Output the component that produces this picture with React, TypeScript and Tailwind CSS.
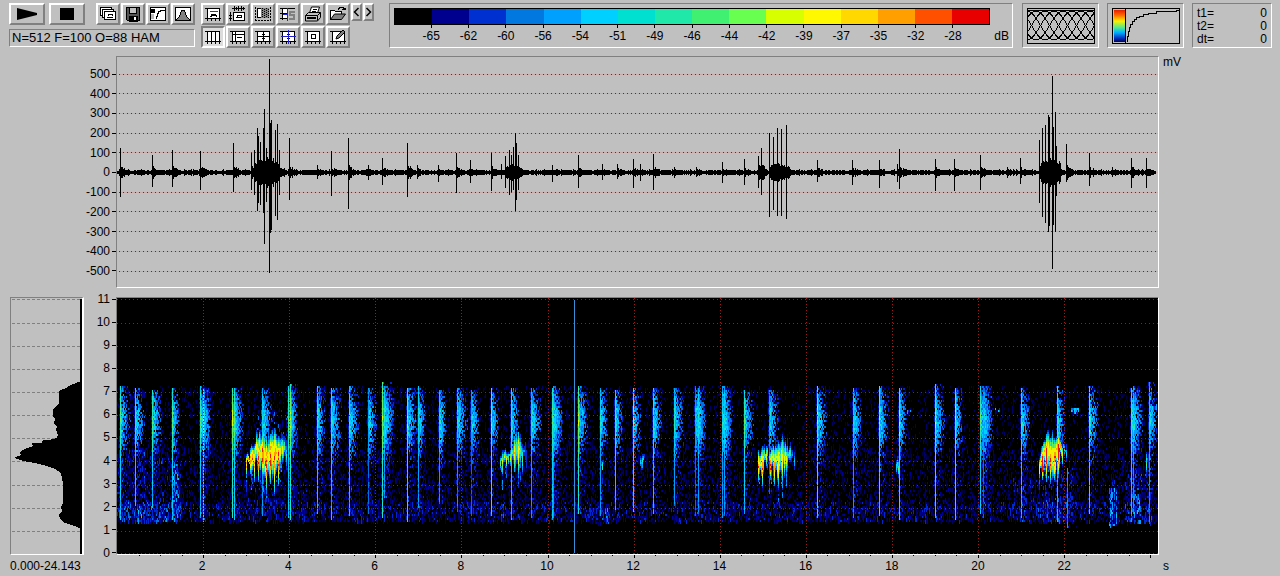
import type { ReactNode } from 'react'

const SCALE = [
    { color: 'bg-[#000000]', label: '-65' },
    { color: 'bg-[#00008f]', label: '-62' },
    { color: 'bg-[#0030d0]', label: '-60' },
    { color: 'bg-[#0078e0]', label: '-56' },
    { color: 'bg-[#00a0ff]', label: '-54' },
    { color: 'bg-[#00d0ff]', label: '-51' },
    { color: 'bg-[#00e0d0]', label: '-49' },
    { color: 'bg-[#20e8a8]', label: '-46' },
    { color: 'bg-[#40f070]', label: '-44' },
    { color: 'bg-[#68ff50]', label: '-42' },
    { color: 'bg-[#d8ff00]', label: '-39' },
    { color: 'bg-[#fff800]', label: '-37' },
    { color: 'bg-[#ffd800]', label: '-35' },
    { color: 'bg-[#ffa000]', label: '-32' },
    { color: 'bg-[#ff5000]', label: '-28' },
    { color: 'bg-[#e80000]', label: '' },
]

// Level colours, quietest first. Level 0 is the black background.
const LEVELS = [
    '#000000', '#00003c', '#000068', '#000098', '#0028d0', '#0070e8', '#00a0ff',
    '#00d0ff', '#20e8c0', '#60f060', '#d8ff00', '#fff000', '#ffa000', '#f01000',
]

const MILLIVOLTS = [500, 400, 300, 200, 100, 0, -100, -200, -300, -400, -500]
const KILOHERTZ = [11, 10, 9, 8, 7, 6, 5, 4, 3, 2, 1, 0]
const SECONDS = [2, 4, 6, 8, 10, 12, 14, 16, 18, 20, 22]

const PLOT_W = 1041
const WAVE_H = 230
const SPEC_H = 256
const SECOND = 43.05
const KHZ = 23.15

function random(seed: number) {
    let a = seed
    return () => {
        a = (a + 0x6d2b79f5) | 0
        let t = Math.imul(a ^ (a >>> 15), 1 | a)
        t = (t + Math.imul(t ^ (t >>> 7), 61 | t)) ^ t
        return ((t ^ (t >>> 14)) >>> 0) / 4294967296
    }
}

// [x, height above zero, depth below zero]
const SPIKES: [number, number, number][] = [
    [3, 24, 25], [35, 17, 15], [55, 22, 15], [83, 21, 18], [116, 29, 20], [134, 19, 18], [137, 22, 23],
    [140, 44, 39], [141, 36, 31], [143, 30, 33], [146, 44, 41], [147, 63, 72], [149, 24, 30], [152, 113, 101],
    [153, 49, 61], [154, 52, 58], [158, 42, 44], [160, 48, 48], [162, 22, 23], [172, 34, 28], [200, 7, 7],
    [214, 21, 24], [231, 34, 37], [251, 7, 8], [265, 14, 13], [290, 29, 25], [300, 7, 7], [321, 7, 10],
    [339, 19, 21], [353, 12, 11], [374, 19, 19], [384, 8, 7], [388, 16, 16], [392, 22, 23], [394, 17, 20],
    [396, 25, 18], [398, 39, 39], [399, 29, 28], [401, 17, 18], [435, 7, 10], [461, 17, 16], [485, 8, 8],
    [500, 8, 7], [516, 13, 16], [523, 8, 9], [536, 18, 18], [557, 5, 6], [579, 5, 5], [605, 10, 11],
    [627, 13, 13], [641, 16, 16], [644, 24, 23], [652, 39, 45], [656, 35, 38], [660, 44, 44], [664, 43, 44],
    [669, 47, 47], [700, 12, 10], [735, 12, 13], [762, 12, 16], [780, 8, 10], [782, 23, 17], [818, 13, 19],
    [837, 13, 19], [863, 17, 18], [890, 5, 6], [903, 14, 12], [922, 32, 31], [925, 44, 45], [928, 47, 51],
    [931, 57, 60], [932, 55, 54], [935, 96, 97], [936, 45, 53], [938, 60, 60], [939, 26, 24], [949, 28, 10],
    [972, 19, 14], [995, 5, 5], [1014, 14, 16], [1029, 14, 16],
]

// [from, to, amplitude]
const BURSTS: [number, number, number][] = [
    [137, 162, 15], [388, 402, 8], [641, 647, 8], [652, 669, 9], [924, 943, 15],
]

function buildWaveform() {
    const rnd = random(7)
    let d = ''
    for (let x = 0; x < PLOT_W - 2; x++) {
        let amp = 1 + rnd() * 1.6
        for (const [sx, up] of SPIKES) {
            const dist = x - sx
            if (dist >= 0 && dist < 9) amp = Math.max(amp, Math.min(8, 3 + up / 5) * (1 - dist / 10) * (0.4 + rnd() * 0.6))
        }
        for (const [from, to, size] of BURSTS) {
            if (x >= from && x <= to) {
                const shape = Math.sin((Math.PI * (x - from + 4)) / (to - from + 8))
                amp = Math.max(amp, size * (0.4 + 0.6 * shape) * (0.7 + rnd() * 0.35))
            }
        }
        const a = Math.round(amp)
        d += `M${x} ${115 - a}h1v${a * 2 + 1}h-1z`
    }
    for (const [x, up, down] of SPIKES) d += `M${x} ${115 - up}h1v${up + down}h-1z`
    return d
}

// [x, strength, first row, last row], one entry for each click
const CLICKS: [number, number, number, number][] = [
    [3, 8, 88, 222], [18, 8, 90, 208], [35, 8, 92, 210], [55, 8, 90, 222], [83, 8, 88, 220], [86, 9, 90, 224],
    [115, 9, 90, 220], [117, 8, 90, 222], [145, 7, 90, 218], [171, 8, 88, 220], [173, 9, 86, 222],
    [200, 8, 88, 216], [214, 8, 90, 222], [232, 8, 88, 218], [251, 6, 90, 216], [265, 9, 84, 220],
    [267, 7, 88, 200], [290, 9, 90, 224], [301, 7, 88, 210], [322, 7, 92, 205], [340, 7, 90, 214],
    [354, 6, 92, 218], [374, 9, 90, 218], [394, 8, 90, 222], [414, 7, 90, 220], [435, 8, 90, 222],
    [436, 7, 88, 220], [461, 9, 88, 216], [483, 7, 90, 218], [498, 8, 92, 212], [516, 9, 90, 214],
    [536, 8, 90, 216], [557, 7, 90, 208], [578, 6, 88, 218], [581, 7, 90, 216], [605, 7, 88, 220],
    [607, 7, 90, 218], [627, 8, 92, 216], [652, 6, 92, 195], [700, 9, 88, 220], [736, 7, 90, 220],
    [762, 9, 88, 218], [782, 9, 90, 222], [818, 9, 86, 220], [838, 9, 90, 222], [863, 8, 88, 216],
    [866, 6, 88, 220], [904, 8, 90, 220], [940, 8, 88, 224], [950, 7, 170, 230], [972, 9, 88, 216],
    [1014, 8, 90, 218], [1016, 7, 88, 216], [1032, 7, 84, 226],
]

type Call = { peak: number; outline: [number, number, number][] }

// Outline points are [x, top, bottom]
const CALLS: Call[] = [
    {
        peak: 14.6,
        outline: [
            [129, 160, 174], [133, 154, 172], [135, 150, 180], [139, 138, 172], [145, 134, 176], [148, 144, 190],
            [154, 136, 182], [158, 134, 188], [162, 139, 172], [167, 140, 164], [172, 144, 156],
        ],
    },
    { peak: 12, outline: [[383, 158, 176], [389, 154, 168], [394, 148, 168], [399, 134, 176], [403, 142, 170], [409, 149, 158]] },
    { peak: 13.4, outline: [[641, 156, 176], [645, 148, 180], [649, 150, 160], [652, 156, 166], [656, 149, 174], [661, 141, 184], [668, 144, 178], [672, 148, 166], [678, 155, 161]] },
    { peak: 14.8, outline: [[922, 156, 180], [926, 144, 172], [931, 135, 176], [937, 138, 182], [941, 139, 170], [945, 144, 162], [949, 148, 156]] },
    { peak: 10, outline: [[485, 160, 170], [488, 159, 165]] },
    { peak: 10.5, outline: [[523, 160, 174], [527, 158, 162]] },
    { peak: 10.5, outline: [[779, 162, 176], [782, 158, 164]] },
    { peak: 9.5, outline: [[1029, 160, 176], [1033, 154, 162]] },
]

// Patches of scattered noise: [x, y, width, height, density, level]
const PATCHES: [number, number, number, number, number, number][] = [
    [0, 88, 1040, 136, 0.13, 2.6], [0, 150, 1040, 74, 0.13, 3.4], [0, 204, 1040, 20, 0.26, 4.4],
    [0, 150, 64, 74, 0.24, 4.6], [2, 205, 62, 20, 0.4, 5.6], [55, 165, 7, 58, 0.5, 6.6],
    [20, 206, 6, 18, 0.5, 7], [130, 186, 60, 34, 0.16, 4.2], [468, 208, 24, 18, 0.3, 4.6],
    [485, 208, 8, 18, 0.4, 6], [896, 176, 60, 48, 0.26, 4.6], [920, 200, 30, 24, 0.3, 5.4],
    [992, 190, 8, 38, 0.7, 6.8], [994, 176, 4, 20, 0.5, 5.6], [1008, 176, 28, 50, 0.3, 5.4],
    [1014, 196, 10, 28, 0.5, 6.6], [140, 112, 34, 26, 0.22, 5.6], [585, 104, 3, 8, 0.6, 6],
    [790, 112, 5, 3, 0.7, 7], [878, 110, 6, 4, 0.7, 7], [954, 110, 8, 5, 0.8, 7],
    [1034, 106, 6, 6, 0.6, 7], [380, 202, 8, 20, 0.3, 5],
]

function buildSpectrogram() {
    const rnd = random(23)
    const rows = SPEC_H / 2
    const grid = new Float32Array(PLOT_W * rows)
    const put = (x: number, row: number, level: number) => {
        if (x < 0 || x >= PLOT_W - 1 || row < 0 || row >= rows) return
        const i = row * PLOT_W + x
        if (level > grid[i]) grid[i] = level
    }

    for (const [px, py, w, h, density, level] of PATCHES) {
        for (let x = px; x < px + w; x++) {
            const column = 0.3 + rnd() * 1.2
            for (let y = py; y < py + h; y += 2) {
                if (rnd() < density * column) {
                    const v = level * (0.3 + rnd() * 0.8)
                    put(x, y >> 1, v)
                    if (rnd() < 0.4) put(x, (y >> 1) + 1, v)
                }
            }
        }
    }

    for (const [cx, strength, top, bottom] of CLICKS) {
        const width = 4 + Math.floor(rnd() * 4)
        for (let y = top; y < bottom; y += 2) {
            const near = Math.exp(-(((y - 122) / 32) ** 2))
            put(cx, y >> 1, strength - 1.2 + near * 1.8 + rnd() * 0.8)
            if (rnd() < 0.3 + near * 0.5) put(cx - 1, y >> 1, 3 + rnd() * 2)
            for (let k = 1; k <= width + 3; k++) {
                const fade = 1 - k / (width + 5)
                const density = (y < 158 ? 0.25 + near * 0.8 : 0.3) * fade * 1.2
                if (rnd() < density) put(cx + k, y >> 1, (2.8 + near * 3.6 + rnd() * 2.8) * (0.5 + fade * 0.5))
            }
        }
    }

    for (const { peak, outline } of CALLS) {
        const first = outline[0][0]
        const last = outline[outline.length - 1][0]
        for (let x = first; x <= last; x++) {
            const n = Math.max(1, outline.findIndex((p) => p[0] >= x))
            const [x0, t0, b0] = outline[n - 1]
            const [x1, t1, b1] = outline[n]
            const f = (x - x0) / (x1 - x0)
            const stripe = x % 4 === 1 ? 0 : 1
            const top = t0 + (t1 - t0) * f + rnd() * 10 - 5
            const bottom = b0 + (b1 - b0) * f + rnd() * 14 - (stripe ? 12 : 2)
            const column = stripe * 1.4 + rnd() * 2.6
            const late = (x - first) / (last - first + 1)
            const tail = late > 0.72 ? (late - 0.72) * 24 : 0
            for (let y = Math.floor(top / 2) * 2; y < bottom; y += 2) {
                const v = (y - top) / Math.max(4, bottom - top)
                const body = Math.pow(Math.sin(Math.PI * Math.min(1, v * 0.85 + 0.1)), 0.9)
                put(x, y >> 1, Math.max(4, 5 + (peak - 4.5) * body - column - tail - rnd() * 1.6))
            }
            if (last - first > 10 && late < 0.8 && rnd() < 0.35) {
                for (let y = bottom; y < bottom + 8 + rnd() * 14; y += 2) if (rnd() < 0.7) put(x, y >> 1, 4 + rnd() * 2.6)
            }
        }
    }

    const paths = LEVELS.map(() => '')
    const levelAt = (x: number, row: number) => Math.max(0, Math.min(LEVELS.length - 1, Math.floor(grid[row * PLOT_W + x])))
    for (let x = 0; x < PLOT_W; x++) {
        let row = 0
        while (row < rows) {
            const level = levelAt(x, row)
            let end = row + 1
            while (end < rows && levelAt(x, end) === level) end++
            if (level > 0) paths[level] += `M${x} ${row * 2}h1v${(end - row) * 2}h-1z`
            row = end
        }
    }
    return paths
}

const WAVEFORM = buildWaveform()
const SPECTROGRAM = buildSpectrogram()

function Sunken({ className = '', children }: { className?: string; children: ReactNode }) {
    return (
        <div className={`border border-t-[#808080] border-l-[#808080] border-r-white border-b-white ${className}`}>
            {children}
        </div>
    )
}

function ToolButton({
    label,
    size = 'h-[22px] w-6',
    pressed = false,
    children,
}: {
    label: string
    size?: string
    pressed?: boolean
    children: ReactNode
}) {
    const edge = pressed
        ? 'border-t-[#808080] border-l-[#808080] border-r-white border-b-white bg-[#dcdcdc]'
        : 'border-t-white border-l-white border-r-[#808080] border-b-[#808080] bg-[#c0c0c0]'
    return (
        <button type="button" aria-label={label} className={`flex shrink-0 items-center justify-center border-2 ${edge} ${size}`}>
            {children}
        </button>
    )
}

function Glyph({ children }: { children: ReactNode }) {
    return (
        <svg className="h-4 w-[18px]" viewBox="0 0 18 16" fill="none" stroke="#000" shapeRendering="crispEdges">
            {children}
        </svg>
    )
}

// White sheet with axis ticks sticking out, shared by most of the tool icons
function Sheet() {
    return (
        <>
            <path d="M3.5 2.5h12v10h-12z" fill="#fff" />
            <path d="M1 2.5h2M1 12.5h2M15 12.5h2M3.5 13v2M7.5 13v2M11.5 13v2M15.5 13v2" />
        </>
    )
}

const FILE_TOOLS = [
    {
        label: 'Copy',
        icon: (
            <>
                <path d="M1.5 1.5h11v8h-11z" fill="#fff" />
                <path d="M3.5 3.5h11v8h-11z" fill="#fff" />
                <path d="M5.5 5.5h11v8h-11z" fill="#fff" />
                <path d="M8 11.5h6M9 10v-1.500h4v1.500" />
            </>
        ),
    },
    {
        label: 'Save',
        icon: (
            <>
                <path d="M2.5 1.5h13v13h-12l-1-1z" fill="#555" />
                <path d="M5.5 1.5h7v6h-7z" fill="#c0c0c0" />
                <path d="M5 10h8v5H5z" fill="#000" />
                <path d="M10 11h2v3h-2z" fill="#fff" stroke="none" />
            </>
        ),
    },
    {
        label: 'Transfer curve',
        icon: (
            <>
                <path d="M1.5 1.5h15v13h-15z" fill="#fff" />
                <path d="M2 3h3v3H2z" fill="#000" />
                <path d="M2 8h3v5H2z" fill="#bbb" stroke="none" />
                <path d="M7.5 13v-3h1v-3h1v-2h2v-1h4" />
            </>
        ),
    },
    {
        label: 'Histogram',
        icon: (
            <>
                <path d="M1.5 1.5h15v13h-15z" fill="#fff" />
                <path d="M2 14l3-3 3-7h2l3 7 3 3z" fill="#808080" />
            </>
        ),
    },
]

const VIEW_TOOLS: { label: string; pressed?: boolean; icon: ReactNode }[] = [
    {
        label: 'Spectrogram',
        icon: (
            <>
                <Sheet />
                <path d="M6 6v-1h7v1" stroke="#d00000" />
                <path d="M6 10.5h1v-1h5v1h1M7 8.5h5" />
            </>
        ),
    },
    {
        label: 'Waveform and spectrogram',
        icon: (
            <>
                <path d="M3 2.5h13M5.5 0v5M7.5 1v3M9.5 0v5M12.5 0v5M14.5 1v3" />
                <path d="M4.5 6.5h11v8h-11z" fill="#fff" />
                <path d="M1.5 6v9M0 9.5h3M0 12.5h3M7 11.5h6M8 10.5v-1h4v1" />
            </>
        ),
    },
    {
        label: 'Select region',
        icon: (
            <>
                <path d="M1.5 1v14M1 14.5h16M16.5 1v14" strokeDasharray="2 1" />
                <path d="M3.5 2.5h4v9h-4z" fill="#fff" />
                <path d="M7 2h8v10H7z" fill="#808080" stroke="none" />
                <path d="M8.5 2v10M10.5 3v9M12.5 2v10M14.5 3v9" strokeDasharray="1 1" />
            </>
        ),
    },
    {
        label: 'Spectrum settings',
        icon: (
            <>
                <path d="M3 2h6v11H3z" fill="#fff" stroke="none" />
                <path d="M1 2.5h15M3.5 2v12M1 7.5h8M1 12.5h8" />
                <path d="M8.5 2v13M4 8.5h4" stroke="#2020e0" />
                <path d="M16 6h-5v3h4v4h-5" stroke="#808080" strokeWidth="2" />
            </>
        ),
    },
    {
        label: 'Print',
        icon: (
            <>
                <path d="M5.5 7l2-6h8l-2 6" fill="#fff" shapeRendering="auto" />
                <path d="M9 3.5h4M8 5.5h4" />
                <path d="M1.5 9.500l3-3h12v5l-3 3.500h-12z" fill="#c0c0c0" shapeRendering="auto" />
                <path d="M1.500 9.500h12v5M13.500 9.500l3-3" shapeRendering="auto" />
                <path d="M3 12h9" strokeWidth="2" />
            </>
        ),
    },
    {
        label: 'Open',
        icon: (
            <>
                <path d="M1.5 13.5v-9h4l1 1h6v3" fill="#fff" />
                <path d="M1.5 13.5l4-5.5h11l-4 5.5z" fill="#808080" shapeRendering="auto" />
                <path d="M9 3.5l2-2h3l2 2M13 3.5h3v-2" />
            </>
        ),
    },
    { label: 'Vertical cursors', pressed: true, icon: (<><Sheet /><path d="M7.5 2v11M11.5 2v11" /></>) },
    { label: 'Horizontal cursors', icon: (<><Sheet /><path d="M3 5.5h12M6.5 3v10M8 8.5h5" /></>) },
    { label: 'Cross cursor', icon: (<><Sheet /><path d="M9.5 2v11M3 7.5h12M8 5.5h3M8 9.5h3" /></>) },
    {
        label: 'Linked cross cursor',
        icon: (<><Sheet /><path d="M8 5.5h3M8 9.5h3" /><path d="M9.5 1v14M2 7.5h15" stroke="#2020d0" /></>),
    },
    { label: 'Zoom box', icon: (<><Sheet /><path d="M7.5 5.5h4v4h-4z" /></>) },
    {
        label: 'Annotate',
        icon: (
            <>
                <Sheet />
                <path d="M7 10l1-3 6-6 2 2-6 6z" fill="#808080" shapeRendering="auto" />
            </>
        ),
    },
]

function WindowOverlap() {
    const curves: string[] = []
    for (let start = -54; start < 66; start += 9) {
        let d = ''
        for (let x = Math.max(0, start); x <= Math.min(68, start + 54); x++) {
            const s = Math.sin((Math.PI * (x - start)) / 54)
            d += `${d ? 'L' : 'M'}${x} ${(32 - 29 * s * s).toFixed(1)}`
        }
        curves.push(d)
    }
    return (
        <svg className="h-9 w-[68px]" viewBox="0 0 68 36" fill="none" stroke="#000" shapeRendering="crispEdges">
            {curves.map((d) => (
                <path key={d} d={d} />
            ))}
            <path d="M.5 .5h67v35h-67zM0 2.5h68" />
        </svg>
    )
}

function TransferCurve() {
    return (
        <svg className="h-9 w-[68px]" viewBox="0 0 68 36" fill="none" stroke="#000" shapeRendering="crispEdges">
            <defs>
                <linearGradient id="levels" x1="0" y1="0" x2="0" y2="1">
                    <stop offset="0" stopColor="#e02000" />
                    <stop offset=".15" stopColor="#ff6000" />
                    <stop offset=".35" stopColor="#f8f000" />
                    <stop offset=".55" stopColor="#50e890" />
                    <stop offset=".7" stopColor="#00b0ff" />
                    <stop offset=".88" stopColor="#0030c0" />
                    <stop offset="1" stopColor="#000050" />
                </linearGradient>
            </defs>
            <path d="M2 2h11v32H2z" fill="url(#levels)" stroke="none" />
            <path d="M.5 .5h67v35h-67zM13.5 0v36" />
            <path d="M15.5 34v-6h1v-5h1v-4h1v-3h2v-3h2v-2h2v-2h3v-1h4v-2h5v-1h8v-2h20v-1h2" />
        </svg>
    )
}

function Toolbar() {
    return (
        <header className="flex items-start pt-[3px] pr-2 pl-[9px]">
            <div className="w-[186px] shrink-0">
                <div className="flex justify-between">
                    <div className="flex gap-1">
                        <ToolButton label="Play" size="h-[22px] w-9">
                            <svg className="h-3 w-5" viewBox="0 0 20 12"><path d="M0 0l20 5v2L0 12z" /></svg>
                        </ToolButton>
                        <ToolButton label="Stop" size="h-[22px] w-9">
                            <span className="h-3 w-[14px] bg-black" />
                        </ToolButton>
                    </div>
                    <div className="flex gap-px">
                        {FILE_TOOLS.map((tool) => (
                            <ToolButton key={tool.label} label={tool.label}><Glyph>{tool.icon}</Glyph></ToolButton>
                        ))}
                    </div>
                </div>
                <Sunken className="mt-1 px-[2px] text-[13px] leading-4">N=512 F=100 O=88 HAM</Sunken>
            </div>

            <div className="ml-[6px] grid shrink-0 grid-cols-6 gap-px">
                {VIEW_TOOLS.map((tool) => (
                    <ToolButton key={tool.label} label={tool.label} pressed={tool.pressed}><Glyph>{tool.icon}</Glyph></ToolButton>
                ))}
            </div>
            <div className="ml-px flex gap-px">
                <ToolButton label="Previous" size="h-[18px] w-[11px]">
                    <svg className="h-[10px] w-[7px] shrink-0" viewBox="0 0 7 10" fill="none" stroke="#000" strokeWidth="1.5"><path d="M5.5 1l-4 4 4 4" /></svg>
                </ToolButton>
                <ToolButton label="Next" size="h-[18px] w-[11px]">
                    <svg className="h-[10px] w-[7px] shrink-0" viewBox="0 0 7 10" fill="none" stroke="#000" strokeWidth="1.5"><path d="M1.5 1l4 4-4 4" /></svg>
                </ToolButton>
            </div>

            <Sunken className="ml-[15px] flex h-[45px] flex-1 gap-1 py-1 pr-[3px] pl-1">
                <div className="flex-1">
                    <div className="flex h-[17px] border border-black">
                        {SCALE.map((s) => <span key={s.color} className={`flex-1 ${s.color}`} />)}
                    </div>
                    <div className="flex">
                        <span className="flex-1" />
                        {SCALE.slice(0, 15).map((s) => (
                            <span key={s.label} className="flex flex-[2] flex-col items-center text-xs leading-4">
                                <span className="h-[3px] w-px bg-black" />
                                {s.label}
                            </span>
                        ))}
                        <span className="flex-1" />
                    </div>
                </div>
                <span className="mt-5 text-xs leading-4">dB</span>
            </Sunken>
            <Sunken className="ml-[9px] flex h-[45px] w-[77px] items-center justify-center"><WindowOverlap /></Sunken>
            <Sunken className="ml-2 flex h-[45px] w-[77px] items-center justify-center"><TransferCurve /></Sunken>
            <Sunken className="ml-2 h-[45px] w-20 px-1 text-xs leading-[13px]">
                <dl className="pt-[3px]">
                    {['t1=', 't2=', 'dt='].map((name) => (
                        <div key={name} className="flex justify-between">
                            <dt>{name}</dt>
                            <dd>0</dd>
                        </div>
                    ))}
                </dl>
            </Sunken>
        </header>
    )
}

function AxisLabels({ values }: { values: number[] }) {
    return (
        <>
            {values.map((v) => (
                <span key={v} className="flex items-center justify-end gap-[2px] text-xs leading-3">
                    {v}
                    <span className="h-px w-1 bg-black" />
                </span>
            ))}
        </>
    )
}

function WaveformPlot() {
    return (
        <section className="flex pt-2">
            <div className="flex w-[116px] shrink-0 flex-col justify-between pt-3 pb-[11px]">
                <AxisLabels values={MILLIVOLTS} />
            </div>
            <Sunken className="flex-1">
                <svg className="block h-[230px] w-full" viewBox={`0 0 ${PLOT_W} ${WAVE_H}`} preserveAspectRatio="none" shapeRendering="crispEdges">
                    {MILLIVOLTS.map((v) => {
                        const y = Math.round(115 - v * 0.197) + 0.5
                        return (
                            <g key={v}>
                                <path d={`M2 ${y}H${PLOT_W}`} stroke="#c8acac" />
                                <path d={`M2 ${y}H${PLOT_W}`} stroke="#8c1c24" strokeDasharray="1 3" />
                            </g>
                        )
                    })}
                    <path d={WAVEFORM} />
                </svg>
            </Sunken>
            <span className="w-[121px] shrink-0 pl-1 text-xs leading-3">mV</span>
        </section>
    )
}

function MeanSpectrum() {
    return (
        <div className="w-[74px] shrink-0">
            <Sunken className="border-r-2">
                <svg className="block h-64 w-full" viewBox="0 0 71 256" preserveAspectRatio="none" shapeRendering="crispEdges">
                    {KILOHERTZ.slice(0, 11).map((k) => (
                        <path key={k} d={`M1 ${Math.round(256 - k * KHZ) + 0.5}H69`} stroke="#808080" strokeDasharray="3 2" />
                    ))}
                    <path d="M69 1h2v255h-2z" />
                    <path d="M70 83L60 87L55 90L48 93V105L45 108L42 112V118L44 121L43 125L46 129L45 132L47 137L46 140L38 142L32 142L31 145L21 145L22 148L14 151L9 154L10 157L3 160L12 163L24 165L36 168L44 171L50 175L52 185V205L50 209L51 213L48 217L49 221L52 224L60 227L66 229L70 231Z" />
                </svg>
            </Sunken>
            <p className="mt-[3px] text-xs leading-4 whitespace-nowrap">0.000-24.143</p>
        </div>
    )
}

function SpectrogramPlot() {
    return (
        <section className="flex pt-[9px] pl-[10px]">
            <MeanSpectrum />
            <div className="-mt-[4px] flex h-[266px] w-8 shrink-0 flex-col justify-between">
                <AxisLabels values={KILOHERTZ} />
            </div>
            <div className="flex-1">
                <Sunken className="bg-black">
                    <svg className="block h-64 w-full" viewBox={`0 0 ${PLOT_W} ${SPEC_H}`} preserveAspectRatio="none" shapeRendering="crispEdges">
                        {SPECTROGRAM.map((d, level) => (
                            <path key={LEVELS[level]} d={d} fill={LEVELS[level]} />
                        ))}
                        {KILOHERTZ.map((k) => {
                            const y = Math.min(255, Math.round(256 - k * KHZ)) + 0.5
                            return <path key={k} d={`M0 ${y}H${PLOT_W}`} stroke="#a01818" strokeDasharray="1 3" />
                        })}
                        {SECONDS.map((s) => {
                            const x = Math.round(s * SECOND) + 0.5
                            return <path key={s} d={`M${x} 0V256`} stroke="#a01818" strokeDasharray="1 2" />
                        })}
                        <path d="M457.5 2V255" stroke="#3a90d8" />
                    </svg>
                </Sunken>
                <svg className="block h-[3px] w-full" viewBox="0 0 1043 3" preserveAspectRatio="none" shapeRendering="crispEdges">
                    {Array.from({ length: 48 }, (_, i) => (
                        <path key={i} d={`M${Math.round((i + 1) * SECOND * 0.5) + 1.5} 0v${i % 4 === 3 ? 3 : 1}`} stroke="#000" />
                    ))}
                </svg>
                <div className="flex text-xs leading-4">
                    <span className="flex-[10]" />
                    {SECONDS.map((s) => (
                        <span key={s} className="flex-[20] text-center">{s}</span>
                    ))}
                    <span className="flex-[12]" />
                </div>
            </div>
            <span className="w-[121px] shrink-0 self-end pl-1 text-xs leading-4">s</span>
        </section>
    )
}

export default function App() {
    return (
        <main className="min-h-screen bg-[#c0c0c0] font-['Liberation_Sans',Arial,sans-serif] text-black">
            <Toolbar />
            <WaveformPlot />
            <SpectrogramPlot />
        </main>
    )
}
